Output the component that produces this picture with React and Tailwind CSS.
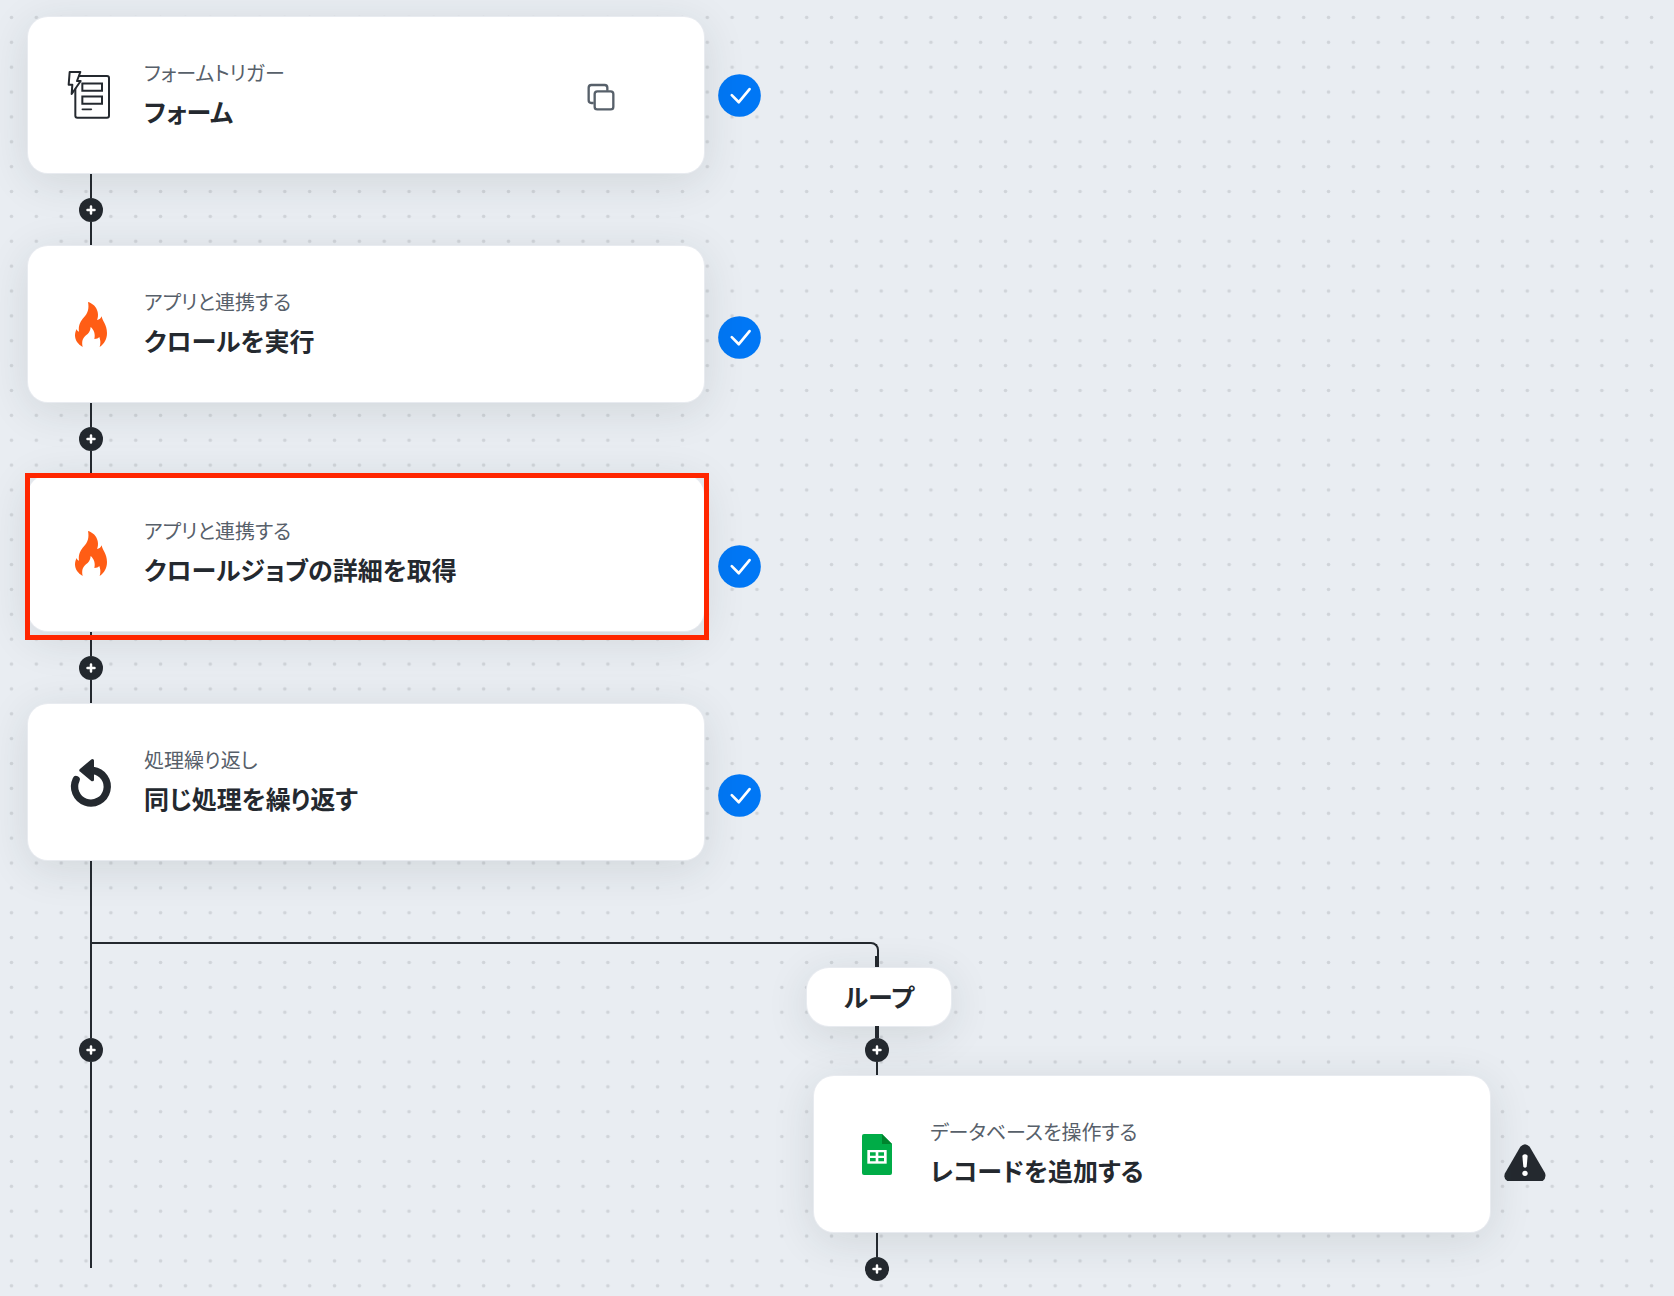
const INK = "#24292f";

function DotGrid() {
  return (
    <svg className="absolute inset-0 size-full" aria-hidden="true">
      <defs>
        <pattern id="dots" x="-1" y="5" width="24.85" height="24.87" patternUnits="userSpaceOnUse">
          <circle cx="12.5" cy="12.5" r="1.8" fill="#d0d4d9" />
        </pattern>
      </defs>
      <rect width="100%" height="100%" fill="url(#dots)" />
    </svg>
  );
}

function FormIcon() {
  return (
    <svg
      className="size-12 shrink-0 overflow-visible"
      viewBox="201 213 144 144"
      fill="none"
      stroke={INK}
      strokeWidth="6"
      strokeLinecap="round"
      strokeLinejoin="round"
      aria-hidden="true"
    >
      <rect x="226" y="228" width="101" height="125" rx="6" />
      <path d="M247 250.500H306V272H247ZM247 289.500H306V311H247Z" strokeLinejoin="miter" />
      <path d="M247 328H274" strokeWidth="5" />
      <path d="M209 216H241L231 243H242L215 282L217 254H206Z" fill="#fff" />
    </svg>
  );
}

function FlameIcon() {
  return (
    <svg className="size-12 shrink-0" viewBox="201 180 144 144" fill="#ff5d15" aria-hidden="true">
      <path d="M264 186C278 190 290 201 293 216C295 225 294 233 291 240C298 239 303 235 305 229C307 243 321 254 321 279C321 297 313 311 299 321C302 311 302 302 298 291C295 295 290 297 283 297C287 284 282 269 272 261C271 274 265 281 258 286C247 295 245 306 248 321C234 313 225 301 225 286C225 279 227 273 230 267C231 271 233 274 237 275C234 255 243 242 252 232C263 220 268 206 264 186Z" />
    </svg>
  );
}

function RepeatIcon() {
  return (
    <svg className="size-12 shrink-0 overflow-visible" viewBox="201 204 144 144" fill="none" stroke={INK} aria-hidden="true">
      <path d="M228.500 269A49 49 0 1 0 279 241.500" strokeWidth="22" strokeLinecap="round" />
      <path d="M243 241L277 212V269Z" fill={INK} strokeWidth="10" strokeLinejoin="round" />
    </svg>
  );
}

function SheetIcon() {
  return (
    <svg className="size-12 shrink-0" viewBox="219 630 144 144" aria-hidden="true">
      <path d="M252 642H306L336 672V759Q336 765 330 765H252Q246 765 246 759V648Q246 642 252 642Z" fill="#00ac47" />
      <path d="M306 642L336 672H306Z" fill="#00832d" />
      <rect x="262" y="690" width="58" height="41" fill="#fff" />
      <path d="M270 697H287V707H270ZM295 697H312V707H295ZM270 714H287V724H270ZM295 714H312V724H295Z" fill="#00ac47" />
    </svg>
  );
}

function CheckBadge() {
  return (
    <svg className="size-[43px] shrink-0" viewBox="-64 -64 128 128" role="img" aria-label="完了">
      <circle r="63.500" fill="#0077f5" />
      <path
        d="M-23 -1L-2 20L30 -19"
        fill="none"
        stroke="#fff"
        strokeWidth="8"
        strokeLinecap="round"
        strokeLinejoin="round"
      />
    </svg>
  );
}

function WarningBadge() {
  return (
    <svg className="h-[37px] w-[42px] shrink-0" viewBox="194 252 126 111" role="img" aria-label="警告">
      <path
        d="M243 260Q257 245 271 260L317 339Q322 354 310 363H204Q191 356 197 340Z"
        fill={INK}
      />
      <path d="M249 287Q257 279 265 287L262 320Q257 326 252 320Z" fill="#fff" />
      <circle cx="257" cy="340" r="8" fill="#fff" />
    </svg>
  );
}

function CopyButton() {
  return (
    <button type="button" aria-label="コピー" className="mt-[3px] mr-[89px] size-7 shrink-0 cursor-pointer">
      <svg
        className="size-7"
        viewBox="82 98 84 84"
        fill="none"
        stroke="#57606a"
        strokeWidth="7"
        strokeLinejoin="round"
        aria-hidden="true"
      >
        <path d="M102 158H95Q87 158 87 150V112Q87 104 95 104H135Q143 104 143 112V121" />
        <rect x="105" y="123" width="56" height="54" rx="8" />
      </svg>
    </button>
  );
}

function AddButton() {
  return (
    <button
      type="button"
      aria-label="追加"
      className="size-6 shrink-0 cursor-pointer rounded-full bg-[#24292f]"
    >
      <svg viewBox="0 0 24 24" stroke="#fff" strokeWidth="2.5" strokeLinecap="round" aria-hidden="true">
        <path d="M12 8.500V15.500M8.500 12H15.500" />
      </svg>
    </button>
  );
}

function Connector() {
  return (
    <div className="ml-[51px] flex h-[73px] w-6 flex-col items-center">
      <span className="w-[2px] grow bg-[#24292f]" />
      <AddButton />
      <span className="w-[2px] grow bg-[#24292f]" />
    </div>
  );
}

function NodeCard({ icon, kind, title, action, status, highlighted }) {
  return (
    <div className="flex gap-[14px]">
      <article className="relative flex h-[156px] w-[676px] shrink-0 items-center rounded-[20px] bg-white pl-[39px] shadow-[0_0_0_1px_#e8ebf0,0_8px_44px_rgba(36,46,50,0.12)]">
        {icon}
        <div className="ml-[29px] grow pb-[3px]">
          <p className="text-[20px] leading-[30px] text-[#57606a]">{kind}</p>
          <h2 className="mt-[5px] text-[25px] leading-[36px] font-bold text-[#24292f]">{title}</h2>
        </div>
        {action}
        {highlighted && (
          <span className="absolute -top-[2px] -right-[5px] -bottom-[9px] -left-[3px] z-10 border-5 border-[#ff2600]" />
        )}
      </article>
      {status}
    </div>
  );
}

function Status({ children, lowered }) {
  return <div className={lowered ? "flex items-center pt-[26px]" : "flex items-center"}>{children}</div>;
}

const steps = [
  { kind: "フォームトリガー", title: "フォーム", icon: <FormIcon />, action: <CopyButton /> },
  { kind: "アプリと連携する", title: "クロールを実行", icon: <FlameIcon />, lowered: true },
  { kind: "アプリと連携する", title: "クロールジョブの詳細を取得", icon: <FlameIcon />, lowered: true, highlighted: true },
  { kind: "処理繰り返し", title: "同じ処理を繰り返す", icon: <RepeatIcon />, lowered: true },
];

export default function App() {
  return (
    <main
      lang="ja"
      className="relative min-h-screen overflow-hidden bg-[#e9edf2] pt-[17px] pl-7 font-['Noto_Sans_CJK_JP',sans-serif] [font-feature-settings:'palt']"
    >
      <DotGrid />
      <div className="relative">
        {steps.map((step, i) => (
          <div key={step.title}>
            {i > 0 && <Connector />}
            <NodeCard
              {...step}
              status={
                <Status lowered={step.lowered}>
                  <CheckBadge />
                </Status>
              }
            />
          </div>
        ))}

        <div className="ml-[51px] flex items-start">
          <div className="flex w-6 shrink-0 flex-col items-center">
            <span className="h-[178px] w-[2px] bg-[#24292f]" />
            <AddButton />
            <span className="h-[206px] w-[2px] bg-[#24292f]" />
          </div>

          <div className="-ml-[11px] pt-[82px]">
            <div className="h-[14px] w-[787px] rounded-tr-lg border-t-2 border-r-2 border-[#24292f]" />
            <div className="ml-[773px]">
              <div className="flex w-6 flex-col items-center">
                <span className="h-3 w-1 bg-[#24292f]" />
                <div className="ml-1 flex h-[58px] w-36 shrink-0 items-center justify-center rounded-[22px] bg-white pb-[3px] text-[25px] leading-[36px] font-bold text-[#24292f] shadow-[0_0_0_1px_#e8ebf0,0_8px_44px_rgba(36,46,50,0.12)]">
                  ループ
                </div>
                <span className="h-3 w-1 bg-[#24292f]" />
                <AddButton />
                <span className="h-[14px] w-[2px] bg-[#24292f]" />
              </div>
              <div className="-ml-[51px]">
                <NodeCard
                  kind="データベースを操作する"
                  title="レコードを追加する"
                  icon={<SheetIcon />}
                  status={
                    <div className="flex items-center pt-4">
                      <WarningBadge />
                    </div>
                  }
                />
              </div>
              <div className="flex w-6 flex-col items-center">
                <span className="h-[25px] w-[2px] bg-[#24292f]" />
                <AddButton />
              </div>
            </div>
          </div>
        </div>
      </div>
    </main>
  );
}
